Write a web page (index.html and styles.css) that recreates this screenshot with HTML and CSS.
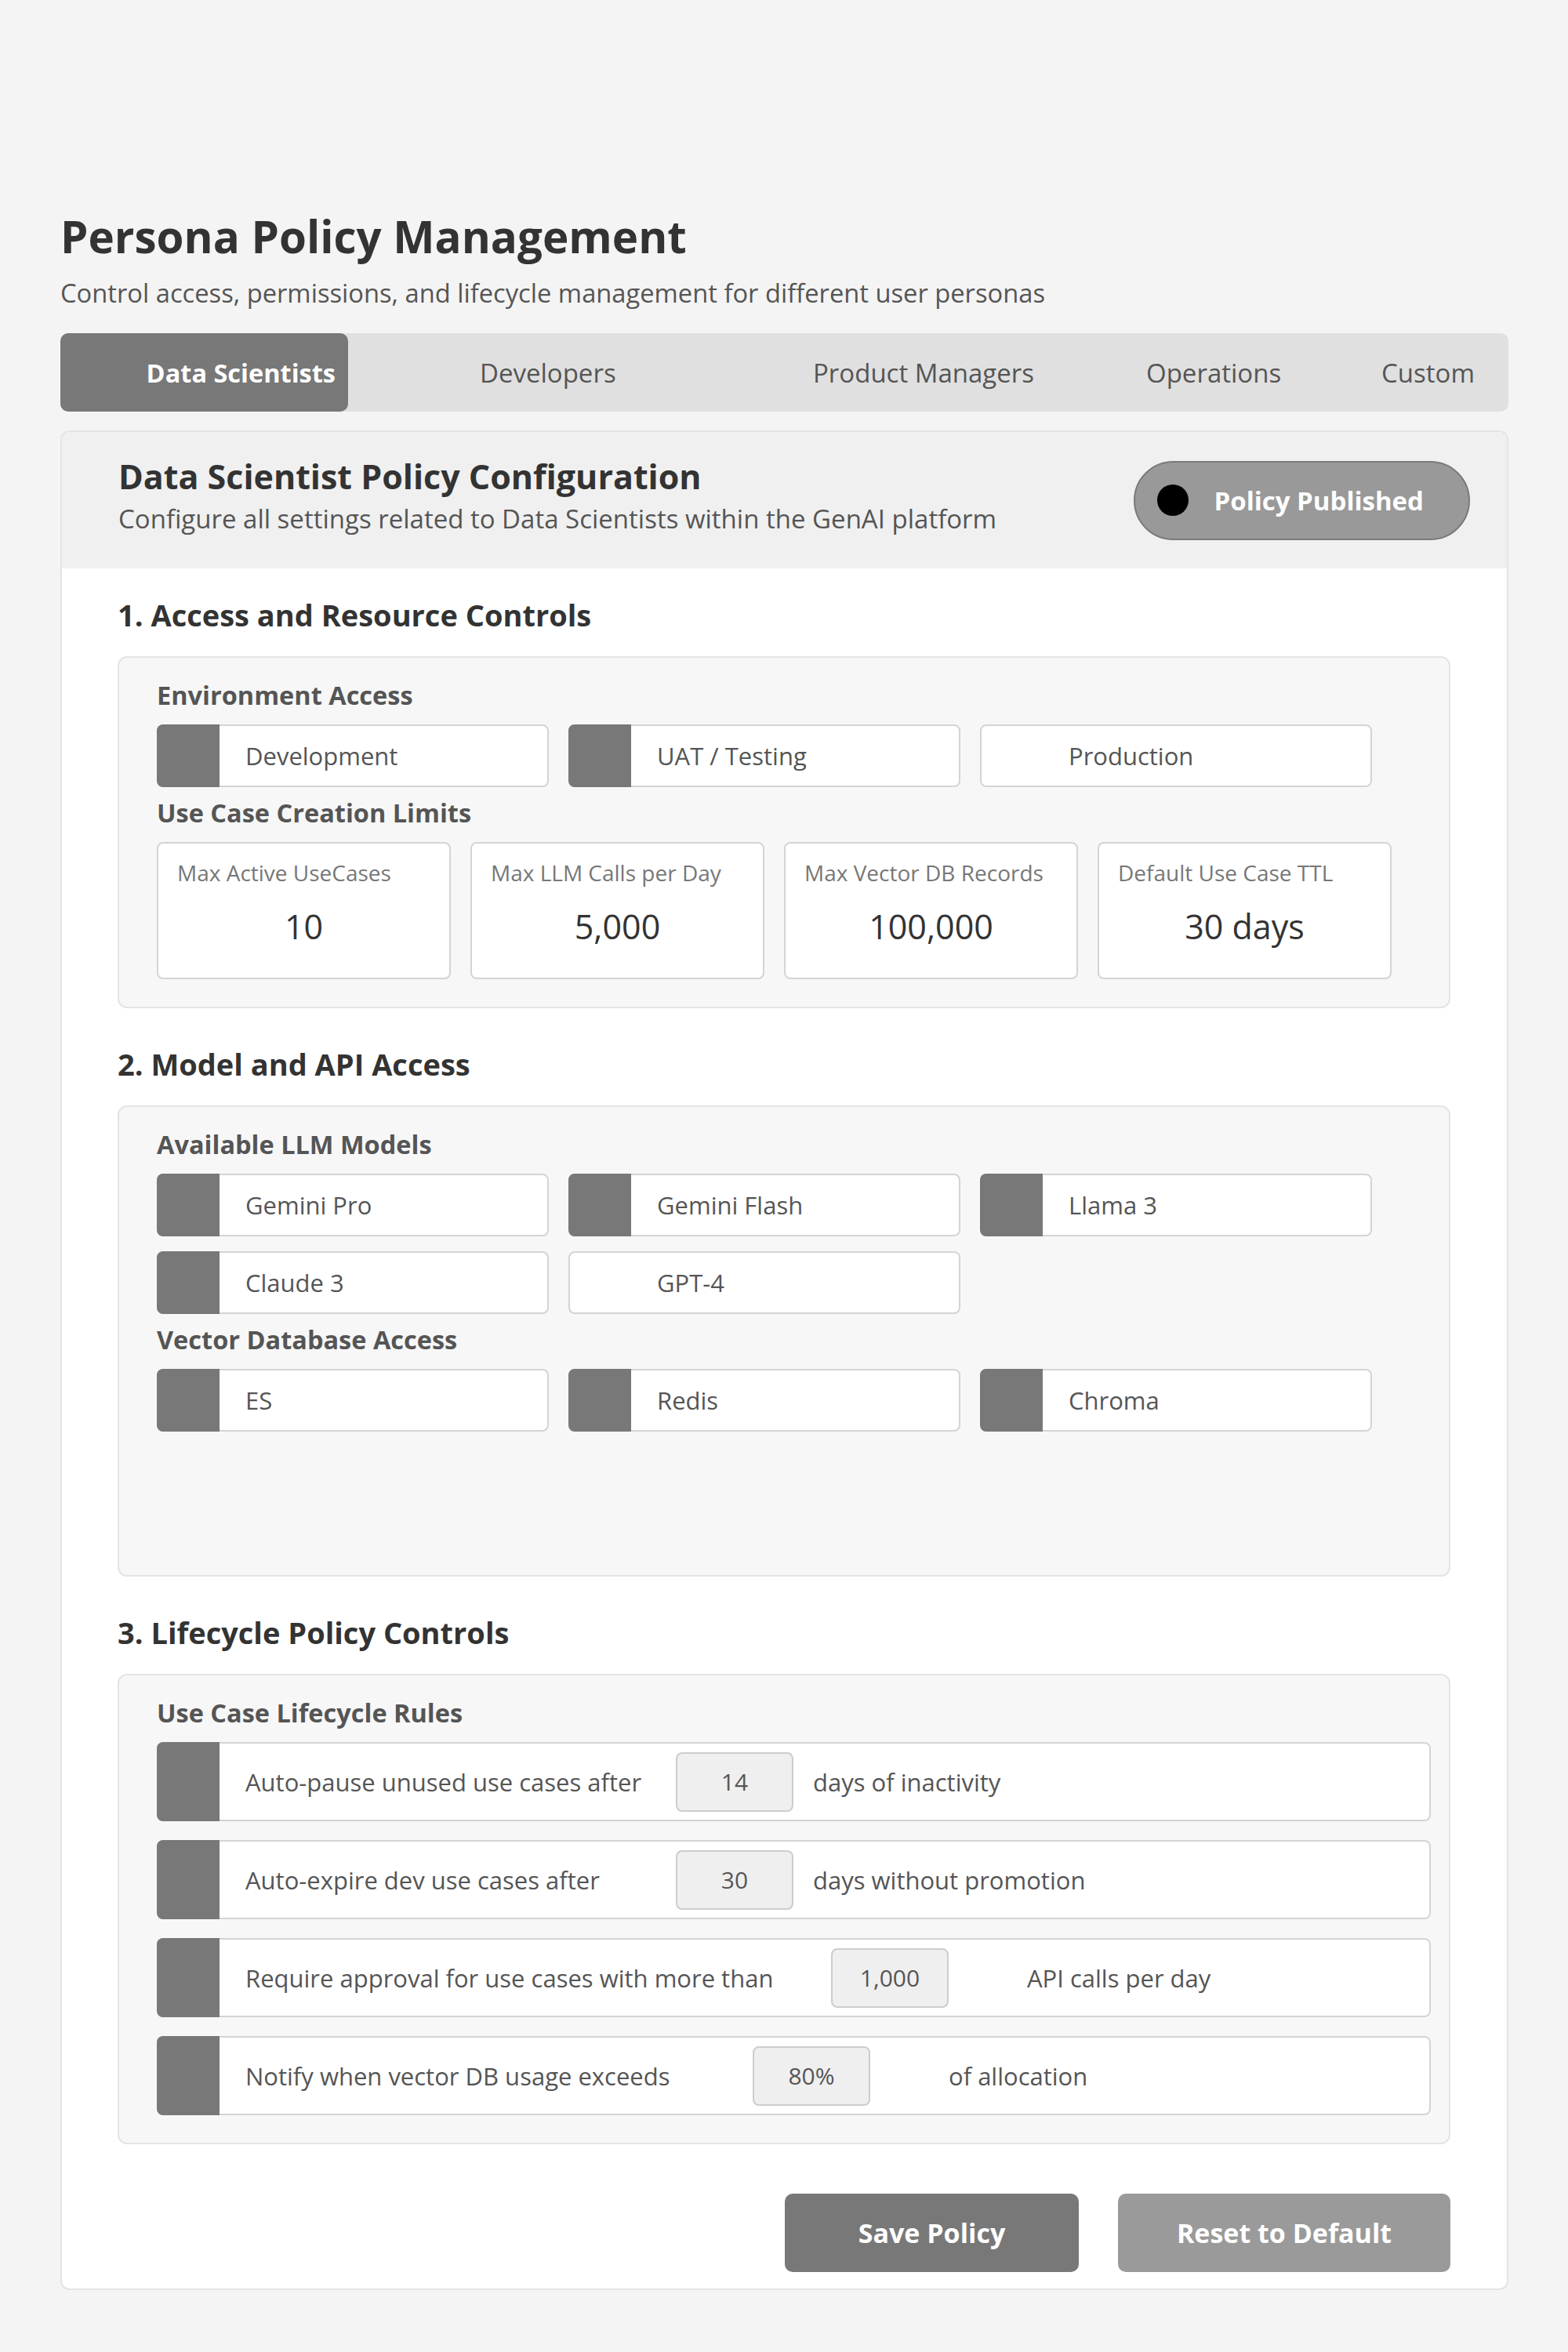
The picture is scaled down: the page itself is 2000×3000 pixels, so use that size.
FILE: index.html
```html
<!DOCTYPE html>
<html lang="en">
<head>
<meta charset="utf-8">
<title>Persona Policy Management</title>
<link rel="stylesheet" href="styles.css">
</head>
<body>
<div class="page">
  <h1 class="title">Persona Policy Management</h1>
  <p class="subtitle">Control access, permissions, and lifecycle management for different user personas</p>

  <nav class="tabs">
    <div class="tab tab-active">Data Scientists</div>
    <div class="tab">Developers</div>
    <div class="tab">Product Managers</div>
    <div class="tab">Operations</div>
    <div class="tab tab-last">Custom</div>
  </nav>

  <div class="card">
    <header class="card-header">
      <div class="header-text">
        <h2 class="card-title">Data Scientist Policy Configuration</h2>
        <p class="card-desc">Configure all settings related to Data Scientists within the GenAI platform</p>
      </div>
      <div class="badge"><span class="dot"></span>Policy Published</div>
    </header>

    <div class="card-body">
      <h3 class="section-title">1. Access and Resource Controls</h3>
      <div class="panel">
        <h4 class="group-title">Environment Access</h4>
        <div class="options">
          <div class="option"><span class="check on"></span>Development</div>
          <div class="option"><span class="check on"></span>UAT / Testing</div>
          <div class="option"><span class="check"></span>Production</div>
        </div>
        <h4 class="group-title group-next">Use Case Creation Limits</h4>
        <div class="limits">
          <div class="limit"><div class="limit-label">Max Active UseCases</div><div class="limit-value">10</div></div>
          <div class="limit"><div class="limit-label">Max LLM Calls per Day</div><div class="limit-value">5,000</div></div>
          <div class="limit"><div class="limit-label">Max Vector DB Records</div><div class="limit-value">100,000</div></div>
          <div class="limit"><div class="limit-label">Default Use Case TTL</div><div class="limit-value">30 days</div></div>
        </div>
      </div>

      <h3 class="section-title section-next">2. Model and API Access</h3>
      <div class="panel panel-tall">
        <h4 class="group-title">Available LLM Models</h4>
        <div class="options">
          <div class="option"><span class="check on"></span>Gemini Pro</div>
          <div class="option"><span class="check on"></span>Gemini Flash</div>
          <div class="option"><span class="check on"></span>Llama 3</div>
          <div class="option"><span class="check on"></span>Claude 3</div>
          <div class="option"><span class="check"></span>GPT-4</div>
        </div>
        <h4 class="group-title group-next">Vector Database Access</h4>
        <div class="options">
          <div class="option"><span class="check on"></span>ES</div>
          <div class="option"><span class="check on"></span>Redis</div>
          <div class="option"><span class="check on"></span>Chroma</div>
        </div>
      </div>

      <h3 class="section-title section-next">3. Lifecycle Policy Controls</h3>
      <div class="panel">
        <h4 class="group-title">Use Case Lifecycle Rules</h4>
        <div class="rules">
          <div class="rule">
            <span class="check on"></span>
            <span class="rule-text">Auto-pause unused use cases after</span>
            <span class="rule-input">14</span>
            <span class="rule-suffix">days of inactivity</span>
          </div>
          <div class="rule">
            <span class="check on"></span>
            <span class="rule-text">Auto-expire dev use cases after</span>
            <span class="rule-input">30</span>
            <span class="rule-suffix">days without promotion</span>
          </div>
          <div class="rule rule-wide">
            <span class="check on"></span>
            <span class="rule-text">Require approval for use cases with more than</span>
            <span class="rule-input">1,000</span>
            <span class="rule-suffix">API calls per day</span>
          </div>
          <div class="rule rule-mid">
            <span class="check on"></span>
            <span class="rule-text">Notify when vector DB usage exceeds</span>
            <span class="rule-input">80%</span>
            <span class="rule-suffix">of allocation</span>
          </div>
        </div>
      </div>

      <div class="actions">
        <button class="btn btn-save">Save Policy</button>
        <button class="btn btn-reset">Reset to Default</button>
      </div>
    </div>
  </div>
</div>
</body>
</html>
```

FILE: styles.css
```css
body {
  margin: 0;
  background: #f4f4f4;
  font-family: "Open Sans", "Noto Sans", sans-serif;
  color: #333;
}

.page {
  padding: 267px 76px 60px 77px;
}

.title {
  margin: 0;
  font-size: 56.5px;
  line-height: 70px;
  font-weight: 700;
  color: #333;
}

.subtitle {
  margin: 17px 0 0;
  font-size: 32.7px;
  line-height: 40px;
  color: #555;
}

/* Tabs */
.tabs {
  display: flex;
  margin-top: 31px;
  height: 100px;
  background: #e0e0e0;
  border-radius: 10px;
}

.tab {
  display: flex;
  align-items: center;
  box-sizing: border-box;
  flex: 0 0 425px;
  min-width: 0;
  padding-left: 168px;
  font-size: 33px;
  color: #555;
  white-space: nowrap;
}

.tab-active {
  flex: 0 0 367px;
  padding: 0 16px 0 0;
  justify-content: flex-end;
  background: #787878;
  color: #fff;
  font-weight: 700;
  font-size: 32.5px;
  border-radius: 10px;
}

.tab-last {
  flex: 1 1 auto;
  padding: 0 43px 0 0;
  justify-content: flex-end;
}

/* Card */
.card {
  margin-top: 24px;
  background: #fff;
  border: 2px solid #e4e4e4;
  border-radius: 12px;
  overflow: hidden;
}

.card-header {
  display: flex;
  align-items: center;
  justify-content: space-between;
  height: 174px;
  padding: 0 47px 0 72px;
  background: #f0f0f0;
}

.header-text {
  margin-bottom: 13px;
}

.card-title {
  margin: 0;
  font-size: 43px;
  line-height: 54px;
  font-weight: 700;
  color: #333;
}

.card-desc {
  margin: 7px 0 0;
  font-size: 33px;
  line-height: 40px;
  color: #555;
}

.badge {
  display: flex;
  align-items: center;
  gap: 32px;
  box-sizing: border-box;
  height: 101px;
  padding: 0 57px 0 28px;
  background: #999;
  border: 2px solid #7a7a7a;
  border-radius: 60px;
  color: #fff;
  font-size: 33px;
  font-weight: 700;
  white-space: nowrap;
}

.dot {
  width: 40px;
  height: 40px;
  border-radius: 50%;
  background: #000;
}

.card-body {
  padding: 36px 72px 21px 71px;
}

.section-title {
  margin: 0 0 30px;
  font-size: 38px;
  line-height: 46px;
  font-weight: 700;
  color: #333;
}

.section-next {
  margin-top: 48px;
}

.panel {
  box-sizing: border-box;
  background: #f7f7f7;
  border: 2px solid #e4e4e4;
  border-radius: 12px;
  padding: 28px 23px 35px 48px;
}

.panel-tall {
  min-height: 601px;
}

.group-title {
  margin: 0 0 17px;
  font-size: 32.5px;
  line-height: 40px;
  font-weight: 700;
  color: #555;
}

.group-next {
  margin-top: 13px;
}

/* Checkbox options */
.options {
  display: flex;
  flex-wrap: wrap;
  column-gap: 25px;
  row-gap: 19px;
}

.option {
  box-sizing: border-box;
  width: 500px;
  height: 80px;
  display: flex;
  align-items: center;
  background: #fff;
  border: 2px solid #d4d4d4;
  border-radius: 8px;
  font-size: 31px;
  color: #555;
}

.check {
  align-self: stretch;
  flex: 0 0 80px;
  margin: -2px 33px -2px -2px;
  border-radius: 8px 0 0 8px;
}

.check.on {
  background: #787878;
}

/* Limits */
.limits {
  display: flex;
  gap: 25px;
}

.limit {
  box-sizing: border-box;
  width: 375px;
  height: 175px;
  padding: 19px 24px 0;
  background: #fff;
  border: 2px solid #d4d4d4;
  border-radius: 8px;
}

.limit-label {
  font-size: 28px;
  line-height: 36px;
  color: #777;
  white-space: nowrap;
}

.limit-value {
  margin-top: 24px;
  font-size: 43px;
  line-height: 54px;
  color: #333;
  text-align: center;
}

/* Lifecycle rules */
.rules {
  display: flex;
  flex-direction: column;
  gap: 24px;
}

.rule {
  box-sizing: border-box;
  height: 101px;
  display: flex;
  align-items: center;
  background: #fff;
  border: 2px solid #d4d4d4;
  border-radius: 8px;
  font-size: 31px;
  color: #555;
  white-space: nowrap;
}

.rule-text {
  flex: 0 0 549px;
}

.rule-wide .rule-text {
  flex-basis: 747px;
}

.rule-mid .rule-text {
  flex-basis: 647px;
}

.rule-input {
  box-sizing: border-box;
  flex: 0 0 150px;
  height: 76px;
  display: flex;
  align-items: center;
  justify-content: center;
  background: #efefef;
  border: 2px solid #cdcdcd;
  border-radius: 8px;
  font-size: 30px;
  color: #555;
}

.rule-suffix {
  margin-left: 25px;
}

.rule-wide .rule-suffix,
.rule-mid .rule-suffix {
  margin-left: 100px;
}

/* Actions */
.actions {
  display: flex;
  justify-content: flex-end;
  gap: 50px;
  margin-top: 63px;
}

.btn {
  height: 100px;
  border: 0;
  border-radius: 10px;
  color: #fff;
  font-family: inherit;
  font-size: 34px;
  font-weight: 700;
}

.btn-save {
  width: 375px;
  background: #787878;
}

.btn-reset {
  width: 424px;
  background: #9a9a9a;
}
```
